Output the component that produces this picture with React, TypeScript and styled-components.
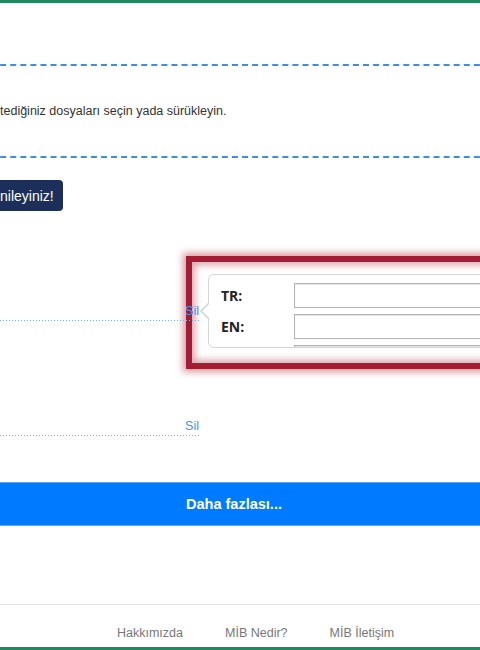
import React from "react";
import styled, { createGlobalStyle } from "styled-components";

const GlobalStyle = createGlobalStyle`
  html, body {
    margin: 0;
    padding: 0;
    overflow: hidden;
    background: #fff;
  }
  body {
    font-family: "Liberation Sans", Arial, sans-serif;
    color: #333;
  }
`;

const Page = styled.div`
  position: relative;
  width: 480px;
  height: 650px;
  overflow: hidden;
  display: flex;
  flex-direction: column;
`;

const GreenBar = styled.div`
  flex-shrink: 0;
  height: 3px;
  background: #1f8a5f;
`;

const DropZone = styled.div`
  box-sizing: border-box;
  margin: 61px -20px 0 -20px;
  height: 94px;
  border: 2px dashed #3a8ee6;
  padding-left: 18px;
  display: flex;
  align-items: center;
  font-size: 12.5px;
  color: #333;
`;

const NoticeButton = styled.div`
  align-self: flex-start;
  box-sizing: border-box;
  margin: 22px 0 0 -10px;
  height: 31px;
  padding: 0 9px 0 10px;
  display: flex;
  align-items: center;
  background: #1b2f5a;
  color: #fff;
  font-size: 14px;
  border-radius: 4px;
`;

const RowList = styled.div`
  display: flex;
  flex-direction: column;
  gap: 94px;
  padding-top: 89px;
  width: 200px;
`;

const FileRow = styled.div`
  position: relative;
  z-index: 2;
  box-sizing: border-box;
  height: 21px;
  padding-bottom: 3px;
  display: flex;
  justify-content: flex-end;
  align-items: flex-end;
  background-image: repeating-linear-gradient(
    to right,
    #6cb9ea 0 1px,
    transparent 1px 3px
  );
  background-size: 100% 1px;
  background-position: left bottom;
  background-repeat: no-repeat;
`;

const DeleteLink = styled.span`
  font-size: 12.5px;
  line-height: 14px;
  color: #3d96f0;
  padding-right: 1px;
`;

const MoreButton = styled.div`
  box-sizing: border-box;
  margin-top: 46px;
  height: 44px;
  padding-right: 12px;
  display: flex;
  align-items: center;
  justify-content: center;
  background: #007bff;
  border-top: 1px solid #5aa7f7;
  border-bottom: 1px solid #5aa7f7;
  color: #fff;
  font-size: 14.5px;
  font-weight: bold;
`;

const Footer = styled.div`
  box-sizing: border-box;
  margin-top: 78px;
  height: 43px;
  border-top: 1px solid #e2e2e2;
  padding: 21px 0 0 117px;
  display: flex;
  gap: 42px;
`;

const FooterLink = styled.span`
  font-size: 12.5px;
  line-height: 15px;
  color: #777;
`;

const Highlight = styled.div`
  position: absolute;
  z-index: 1;
  left: 186px;
  top: 256px;
  width: 320px;
  height: 113px;
  box-sizing: border-box;
  border: 6px solid #a41c31;
  box-shadow: 0 0 7px 3px rgba(164, 28, 49, 0.45),
    inset 0 0 7px 3px rgba(164, 28, 49, 0.4);
`;

const Popover = styled.div`
  position: absolute;
  z-index: 3;
  left: 208px;
  top: 274px;
  width: 300px;
  height: 74px;
  box-sizing: border-box;
  border: 1px solid #d6d6d6;
  border-radius: 6px;
  background: #fff;

  &::before,
  &::after {
    content: "";
    position: absolute;
    top: 36px;
    border-style: solid;
    border-color: transparent;
  }
  &::before {
    left: -9px;
    margin-top: -9px;
    border-width: 9px 9px 9px 0;
    border-right-color: #cfcfcf;
  }
  &::after {
    left: -7px;
    margin-top: -8px;
    border-width: 8px 8px 8px 0;
    border-right-color: #fff;
  }
`;

const PopoverBody = styled.div`
  height: 100%;
  overflow: hidden;
  padding: 8px 0 0 12px;
  box-sizing: border-box;
  display: grid;
  grid-template-columns: 73px 1fr;
  grid-auto-rows: 25px;
  row-gap: 6px;
  align-items: center;
`;

const LangLabel = styled.label`
  font-family: "Open Sans", "DejaVu Sans", sans-serif;
  font-weight: bold;
  font-size: 14px;
  color: #222;
`;

const LangInput = styled.input`
  box-sizing: border-box;
  width: 100%;
  height: 25px;
  margin: 0;
  border: 1px solid #b3b3b3;
  box-shadow: inset 0 1px 0 #e4e4e4;
  background: #fff;
  outline: none;
`;

const languages = ["TR:", "EN:", ""];

export default function App() {
  return (
    <Page>
      <GlobalStyle />
      <GreenBar />
      <DropZone>tediğiniz dosyaları seçin yada sürükleyin.</DropZone>
      <NoticeButton>nileyiniz!</NoticeButton>
      <RowList>
        <FileRow>
          <DeleteLink>Sil</DeleteLink>
        </FileRow>
        <FileRow>
          <DeleteLink>Sil</DeleteLink>
        </FileRow>
      </RowList>
      <MoreButton>Daha fazlası...</MoreButton>
      <Footer>
        <FooterLink>Hakkımızda</FooterLink>
        <FooterLink>MİB Nedir?</FooterLink>
        <FooterLink>MİB İletişim</FooterLink>
      </Footer>
      <GreenBar />

      <Highlight />
      <Popover>
        <PopoverBody>
          {languages.map((lang, i) => (
            <React.Fragment key={i}>
              <LangLabel>{lang}</LangLabel>
              <LangInput type="text" />
            </React.Fragment>
          ))}
        </PopoverBody>
      </Popover>
    </Page>
  );
}
